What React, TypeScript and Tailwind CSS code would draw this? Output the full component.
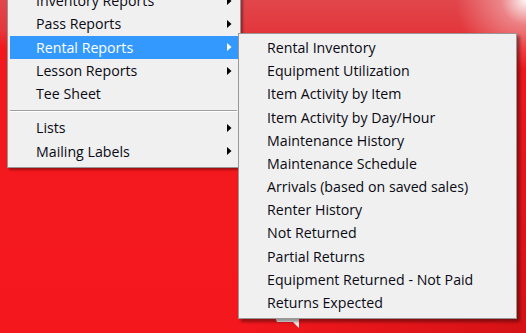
import React from "react";

const Arrow = ({ white }: { white?: boolean }) => (
  <svg width="5" height="8" viewBox="0 0 5 8" className="absolute right-[6px] top-1/2 -translate-y-1/2">
    <path d="M0 0 L4.5 4 L0 8 Z" fill={white ? "#ffffff" : "#000000"} />
  </svg>
);

const leftItems: { label: string; arrow?: boolean; active?: boolean; sep?: boolean }[] = [
  { label: "Inventory Reports", arrow: true },
  { label: "Pass Reports", arrow: true },
  { label: "Rental Reports", arrow: true, active: true },
  { label: "Lesson Reports", arrow: true },
  { label: "Tee Sheet" },
  { label: "", sep: true },
  { label: "Lists", arrow: true },
  { label: "Mailing Labels", arrow: true },
];

const subItems = [
  "Rental Inventory",
  "Equipment Utilization",
  "Item Activity by Item",
  "Item Activity by Day/Hour",
  "Maintenance History",
  "Maintenance Schedule",
  "Arrivals (based on saved sales)",
  "Renter History",
  "Not Returned",
  "Partial Returns",
  "Equipment Returned - Not Paid",
  "Returns Expected",
];

export default function App() {
  return (
    <div
      className="relative w-[526px] h-[333px] overflow-hidden bg-[#f4181d] text-[14.2px] text-[#0a0a14]"
      style={{ fontFamily: '"Open Sans", "Noto Sans", sans-serif' }}
    >
      {/* background shading */}
      <div className="absolute inset-0 bg-[linear-gradient(to_bottom,#e0474c_0px,#e3383d_30px,#f2191e_48px,#f4181d_100%)]" />
      <div className="absolute inset-0 bg-[radial-gradient(circle_at_100%_0%,rgba(255,255,255,0.95)_0px,rgba(255,255,255,0.35)_25px,rgba(255,255,255,0)_70px)]" />
      <div className="absolute inset-0 bg-[linear-gradient(135deg,rgba(0,0,0,0)_65%,rgba(120,0,0,0.25)_100%)]" />

      {/* bubble tail at bottom */}
      <svg className="absolute left-[275px] top-[317px]" width="25" height="12" viewBox="0 0 25 12">
        <path d="M0 0 H24 V11 L18 5 H2 Z" fill="#f4f4f4" />
      </svg>

      {/* left menu */}
      <div className="absolute left-[7px] top-[-14px] w-[234px] bg-[#f0f0f0] border border-[#979797] pt-[2px] pb-[4px] px-[2px] shadow-[2px_2px_2px_rgba(0,0,0,0.35)]">
        <div className="flex flex-col">
          {leftItems.map((it, i) =>
            it.sep ? (
              <div key={i} className="h-[11px] flex flex-col justify-center">
                <div className="h-px bg-[#a0a0a0] mr-[1px]" />
                <div className="h-px bg-white mr-[1px]" />
              </div>
            ) : (
              <div
                key={i}
                className={`relative h-[23.3px] flex items-center pl-[26px] ${
                  it.active ? "bg-[#3399ff] text-white" : ""
                }`}
              >
                <span className="whitespace-nowrap">{it.label}</span>
                {it.arrow && <Arrow white={it.active} />}
              </div>
            )
          )}
        </div>
      </div>

      {/* submenu */}
      <div className="absolute left-[238px] top-[33px] w-[279px] h-[286px] bg-[#f0f0f0] border border-[#979797] pt-[2px] px-[2px] shadow-[3px_3px_3px_rgba(0,0,0,0.4)]">
        <div className="flex flex-col">
          {subItems.map((s) => (
            <div key={s} className="h-[23.2px] flex items-center pl-[26px] whitespace-nowrap">
              {s}
            </div>
          ))}
        </div>
      </div>
    </div>
  );
}
